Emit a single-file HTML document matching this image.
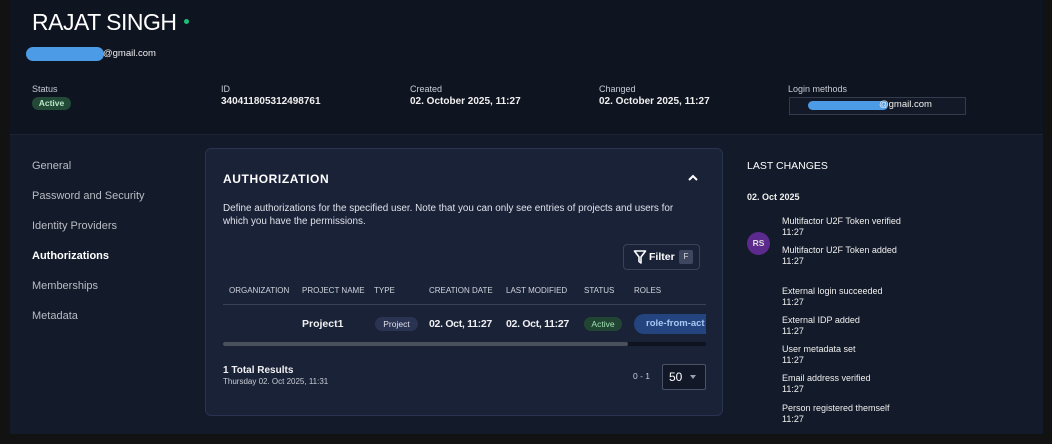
<!DOCTYPE html>
<html><head><meta charset="utf-8"><style>
*{margin:0;padding:0;box-sizing:border-box}
body{width:1052px;height:444px;background:#121212;font-family:"Liberation Sans",sans-serif;color:#e8eaf0;position:relative;overflow:hidden}
.a{position:absolute;white-space:nowrap}
#wrap{position:absolute;left:10px;top:0;width:1033px;height:434px;background:#131a29}
#hdr{position:absolute;left:10px;top:0;width:1033px;height:135px;background:#0f1421;border-bottom:1px solid #1c2333}
.lbl{font-size:9px;color:#c9ccd4}
.val{font-size:10px;color:#f0f0f0;font-weight:bold}
.nav{font-size:11px;color:#b9bcc4}
.th{font-size:8px;color:#d0d4dc}
.ev{font-size:9px;color:#f0f0f0;line-height:11px}
</style></head><body>
<div id="wrap"></div>
<div id="hdr"></div>
<div class="a" style="left:32px;top:9px;font-size:23px;color:#fff;letter-spacing:-0.5px">RAJAT SINGH</div>
<div class="a" style="left:184px;top:19px;width:5px;height:5px;border-radius:50%;background:#1fbf7a"></div>
<div class="a" style="left:26px;top:47px;width:78px;height:14px;border-radius:7px;background:#4b9be6"></div>
<div class="a" style="left:103px;top:48px;font-size:9.5px;color:#f0f0f0">@gmail.com</div>

<div class="a lbl" style="left:32px;top:84px">Status</div>
<div class="a" style="left:32px;top:97px;width:39px;height:13px;border-radius:7px;background:#234a36;color:#b8e6c6;font-size:8.5px;text-align:center;line-height:13px;font-weight:bold">Active</div>
<div class="a lbl" style="left:221px;top:84px">ID</div>
<div class="a val" style="left:221px;top:96px">340411805312498761</div>
<div class="a lbl" style="left:410px;top:84px">Created</div>
<div class="a val" style="left:410px;top:96px">02. October 2025, 11:27</div>
<div class="a lbl" style="left:599px;top:84px">Changed</div>
<div class="a val" style="left:599px;top:96px">02. October 2025, 11:27</div>
<div class="a lbl" style="left:788px;top:84px">Login methods</div>
<div class="a" style="left:789px;top:97px;width:177px;height:18px;border:1px solid #343b4c;background:#131927"></div>
<div class="a" style="left:808px;top:101px;width:80px;height:9px;border-radius:5px;background:#4b9be6"></div>
<div class="a" style="left:879px;top:99px;font-size:9.5px;color:#f0f0f0">@gmail.com</div>

<div class="a nav" style="left:32px;top:160px">General</div>
<div class="a nav" style="left:32px;top:190px">Password and Security</div>
<div class="a nav" style="left:32px;top:220px">Identity Providers</div>
<div class="a nav" style="left:32px;top:250px;color:#fff;font-weight:bold">Authorizations</div>
<div class="a nav" style="left:32px;top:280px">Memberships</div>
<div class="a nav" style="left:32px;top:310px">Metadata</div>

<div class="a" style="left:205px;top:148px;width:518px;height:268px;background:#1a2238;border:1px solid #2a3350;border-radius:6px"></div>
<div class="a" style="left:223px;top:172px;font-size:12px;color:#fff;letter-spacing:0.6px;font-weight:bold">AUTHORIZATION</div>
<svg class="a" style="left:687px;top:173px" width="12" height="9" viewBox="0 0 12 9"><path d="M2 7 L6 3 L10 7" stroke="#fff" stroke-width="2" fill="none"/></svg>
<div class="a" style="left:223px;top:202px;font-size:9.9px;color:#e0e2ea;line-height:13px;white-space:normal;width:475px">Define authorizations for the specified user. Note that you can only see entries of projects and users for which you have the permissions.</div>
<div class="a" style="left:623px;top:244px;width:77px;height:26px;border:1px solid #3a4258;border-radius:4px"></div>
<svg class="a" style="left:633px;top:249px" width="14" height="16" viewBox="0 0 14 16"><path d="M1.5 2 H12.5 L8 8 V14 L6 12.5 V8 Z" stroke="#fff" stroke-width="1.6" fill="none" stroke-linejoin="round"/></svg>
<div class="a" style="left:649px;top:251px;font-size:10.5px;color:#fff;font-weight:bold">Filter</div>
<div class="a" style="left:679px;top:250px;width:14px;height:14px;border-radius:2px;background:#3f4760;font-size:8px;text-align:center;line-height:14px;color:#ddd">F</div>

<div class="a th" style="left:229px;top:286px">ORGANIZATION</div>
<div class="a th" style="left:302px;top:286px">PROJECT NAME</div>
<div class="a th" style="left:374px;top:286px">TYPE</div>
<div class="a th" style="left:429px;top:286px">CREATION DATE</div>
<div class="a th" style="left:506px;top:286px">LAST MODIFIED</div>
<div class="a th" style="left:584px;top:286px">STATUS</div>
<div class="a th" style="left:634px;top:286px">ROLES</div>
<div class="a" style="left:223px;top:304px;width:483px;height:1px;background:#3a4258"></div>
<div class="a" style="left:302px;top:318px;font-size:10.5px;color:#f0f0f0;font-weight:bold">Project1</div>
<div class="a" style="left:375px;top:317px;width:43px;height:14px;border-radius:7px;background:#2a3352;font-size:8.5px;text-align:center;line-height:14px;color:#e0e2ea">Project</div>
<div class="a" style="left:429px;top:318px;font-size:10.5px;color:#f0f0f0;font-weight:bold;letter-spacing:-0.3px">02. Oct, 11:27</div>
<div class="a" style="left:506px;top:318px;font-size:10.5px;color:#f0f0f0;font-weight:bold;letter-spacing:-0.3px">02. Oct, 11:27</div>
<div class="a" style="left:584px;top:317px;width:38px;height:14px;border-radius:7px;background:#224533;font-size:8.5px;text-align:center;line-height:14px;color:#9fe0b4">Active</div>
<div class="a" style="left:634px;top:314px;width:72px;height:20px;border-radius:10px 0 0 10px;background:#23447e;overflow:hidden;font-size:9.5px;line-height:20px;color:#a8c8f5;padding-left:12px;font-weight:bold">role-from-act</div>
<div class="a" style="left:223px;top:342px;width:483px;height:4px;background:#0f1320"></div>
<div class="a" style="left:223px;top:342px;width:405px;height:4px;background:#4a505c;border-radius:2px"></div>

<div class="a" style="left:223px;top:365px;font-size:10px;color:#f0f0f0;font-weight:bold">1 Total Results</div>
<div class="a" style="left:223px;top:377px;font-size:8px;color:#c8ccd4">Thursday 02. Oct 2025, 11:31</div>
<div class="a" style="left:633px;top:371px;font-size:8.5px;color:#c8ccd4">0 - 1</div>
<div class="a" style="left:662px;top:364px;width:44px;height:26px;border:1px solid #4a5268;border-radius:2px;background:#121828"></div>
<div class="a" style="left:669px;top:370px;font-size:12px;color:#fff">50</div>
<div class="a" style="left:690px;top:375px;width:0;height:0;border-left:3.5px solid transparent;border-right:3.5px solid transparent;border-top:4px solid #9aa0ac"></div>

<div class="a" style="left:747px;top:160px;font-size:10.5px;color:#fff">LAST CHANGES</div>
<div class="a" style="left:747px;top:192px;font-size:9px;color:#f0f0f0;font-weight:bold">02. Oct 2025</div>
<div class="a" style="left:747px;top:232px;width:23px;height:23px;border-radius:50%;background:#5b2a8c;font-size:8.5px;font-weight:bold;text-align:center;line-height:23px;color:#ddd">RS</div>
<div class="a ev" style="left:782px;top:216px">Multifactor U2F Token verified<br>11:27</div>
<div class="a ev" style="left:782px;top:245px">Multifactor U2F Token added<br>11:27</div>
<div class="a ev" style="left:782px;top:286px">External login succeeded<br>11:27</div>
<div class="a ev" style="left:782px;top:315px">External IDP added<br>11:27</div>
<div class="a ev" style="left:782px;top:344px">User metadata set<br>11:27</div>
<div class="a ev" style="left:782px;top:373px">Email address verified<br>11:27</div>
<div class="a ev" style="left:782px;top:403px">Person registered themself<br>11:27</div>
</body></html>
